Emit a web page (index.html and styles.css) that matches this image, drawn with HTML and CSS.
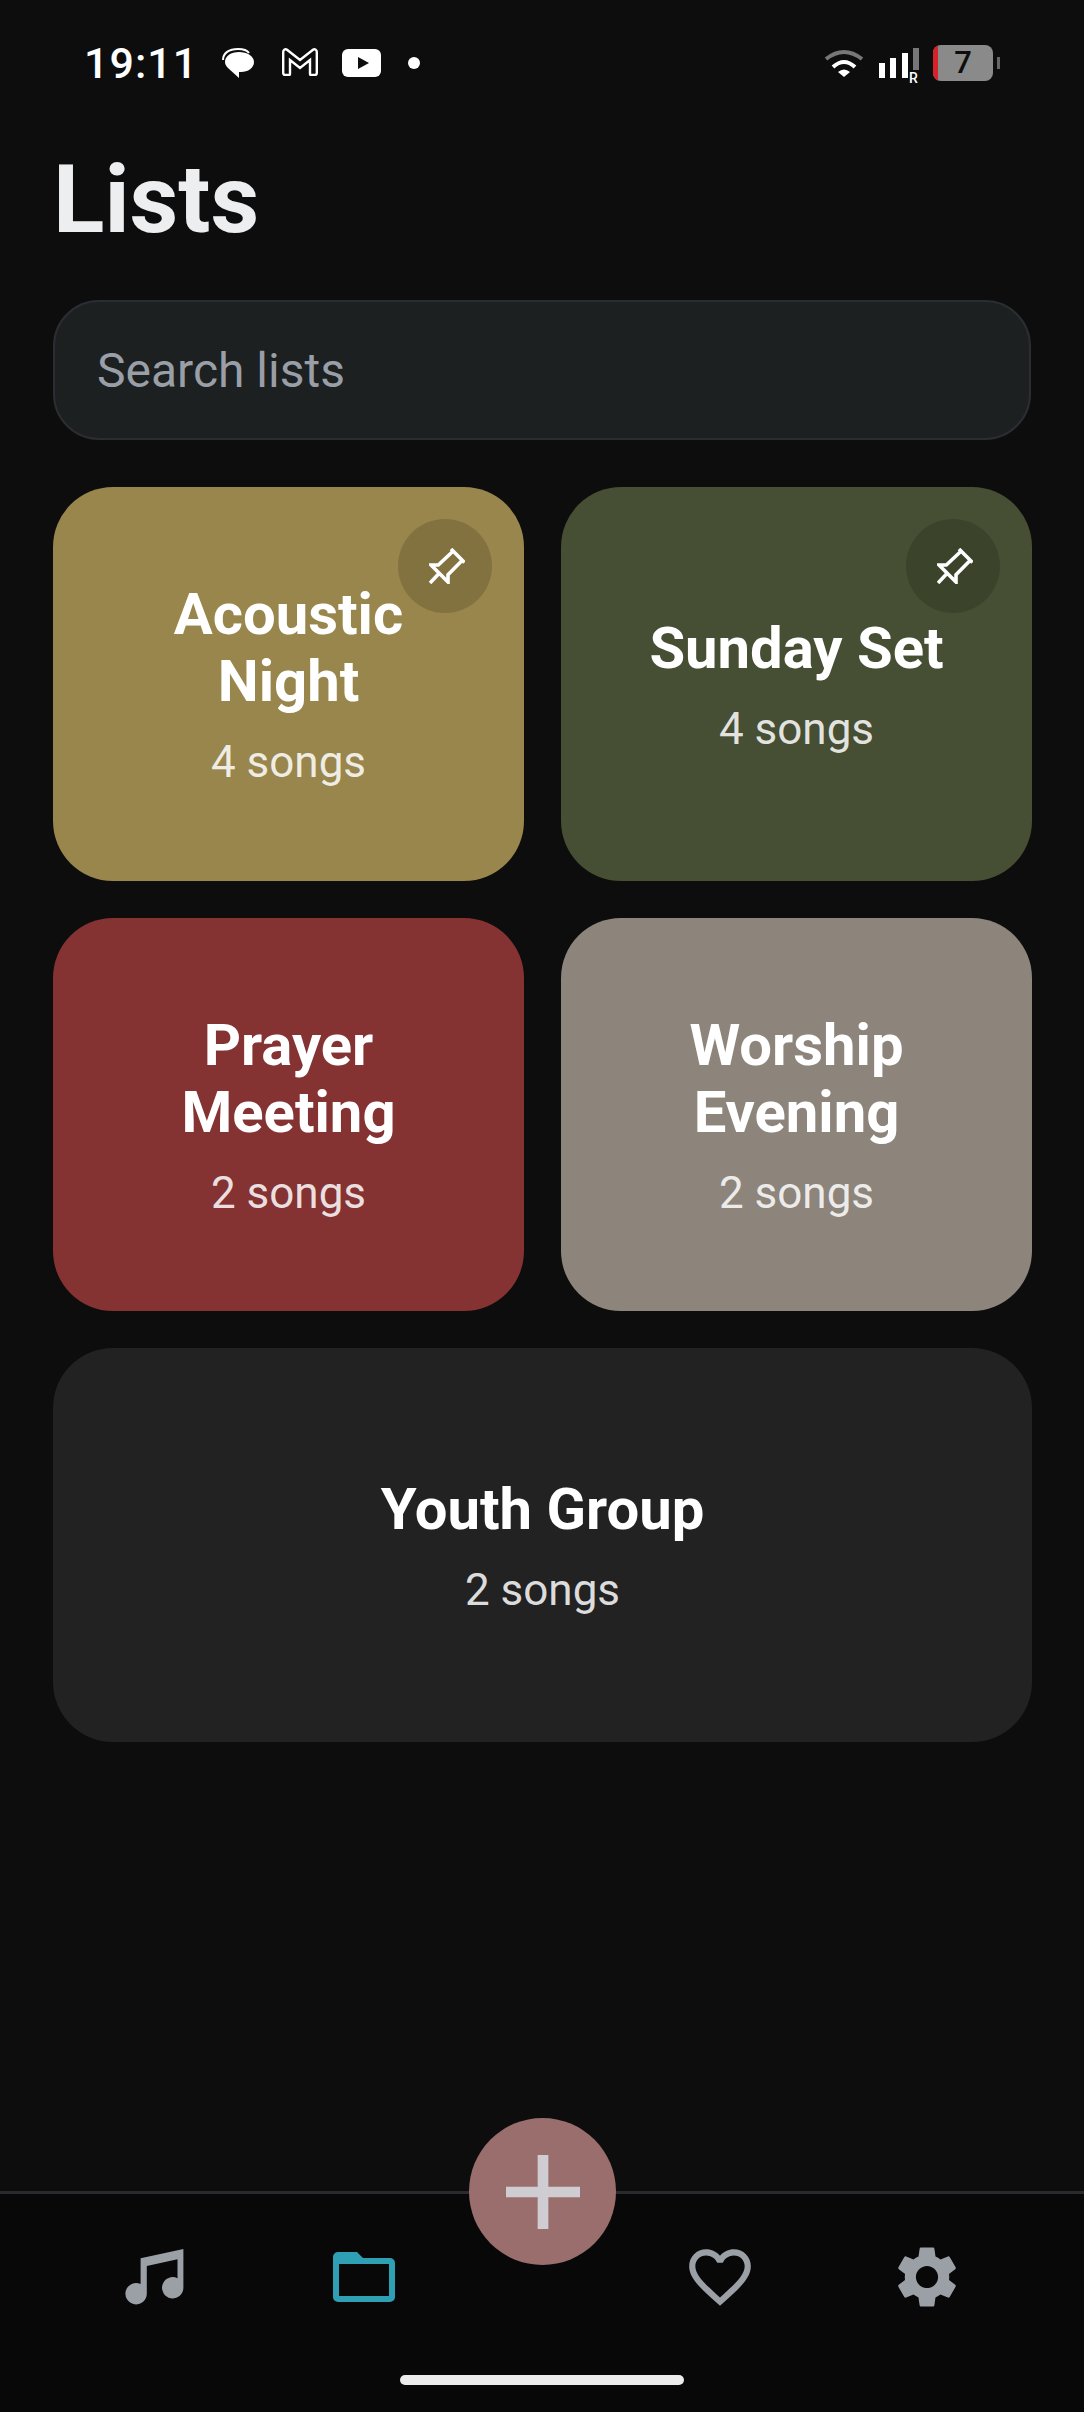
FILE: index.html
```html
<!DOCTYPE html>
<html lang="en">
<head>
  <meta charset="UTF-8">
  <title>Lists</title>
  <link rel="stylesheet" href="styles.css">
</head>
<body>
  <div class="screen">

    <div class="status-bar">
      <span class="time">19:11</span>
      <svg class="st-chat" width="32" height="30" viewBox="0 0 32 30">
        <path d="M1 12C1 5 7 1 16 1c5 0 9 1 11 4" fill="none" stroke="#fff" stroke-width="2"/>
        <path d="M3 14C3 8 9 4 17 4c8 0 15 4 15 10 0 6-6 10-13 10h-2v6L6 20c-2-2-3-4-3-6z" fill="#fff"/>
      </svg>
      <svg class="st-gmail" width="36" height="28" viewBox="0 0 36 28">
        <path d="M1.200 4C1.200 1.500 3.500.6 5 1.800L18 12 31 1.800C32.500.6 34.800 1.500 34.800 4V25c0 1.200-.8 2-2 2H29c-.6 0-1-.4-1-1V12l-10 8-10-8v14c0 .6-.4 1-1 1H3.200c-1.200 0-2-.8-2-2z" fill="none" stroke="#fff" stroke-width="2.400"/>
      </svg>
      <svg class="st-yt" width="39" height="28" viewBox="0 0 39 28">
        <rect width="39" height="28" rx="6" fill="#fff"/>
        <path d="M16 8l11 6-11 6z" fill="#0d0d0d"/>
      </svg>
      <span class="st-dot"></span>

      <div class="status-right">
        <svg width="40" height="28" viewBox="0 0 40 28">
          <path d="M2 10Q20-4 38 10" fill="none" stroke="#777" stroke-width="4"/>
          <path d="M9 18Q20 8 31 18" fill="none" stroke="#fff" stroke-width="4"/>
          <path d="M14 23Q20 18 26 23L20 28z" fill="#fff"/>
        </svg>
        <div class="signal">
          <span class="bar bar-1"></span>
          <span class="bar bar-2"></span>
          <span class="bar bar-3"></span>
          <span class="bar bar-4"></span>
          <span class="roaming">R</span>
        </div>
        <div class="battery">
          <div class="battery-body"><span class="battery-low"></span>7</div>
          <span class="battery-nib"></span>
        </div>
      </div>
    </div>

    <h1 class="page-title">Lists</h1>

    <div class="search">Search lists</div>

    <div class="grid">
      <div class="card gold">
        <span class="pin-btn">
          <svg width="36" height="36" viewBox="0 0 36 36"><path d="M1 35l8.500-9M22 1l13.500 13.500M24 3.300L9.300 17H2l17 17v-7.300L33.300 12.300" fill="none" stroke="#fff" stroke-width="3.600"/></svg>
        </span>
        <div class="card-title">Acoustic Night</div>
        <div class="card-count">4 songs</div>
      </div>
      <div class="card olive">
        <span class="pin-btn">
          <svg width="36" height="36" viewBox="0 0 36 36"><path d="M1 35l8.500-9M22 1l13.500 13.500M24 3.300L9.300 17H2l17 17v-7.300L33.300 12.300" fill="none" stroke="#fff" stroke-width="3.600"/></svg>
        </span>
        <div class="card-title">Sunday Set</div>
        <div class="card-count">4 songs</div>
      </div>
      <div class="card red">
        <div class="card-title">Prayer Meeting</div>
        <div class="card-count">2 songs</div>
      </div>
      <div class="card stone">
        <div class="card-title">Worship Evening</div>
        <div class="card-count">2 songs</div>
      </div>
      <div class="card dark wide">
        <div class="card-title">Youth Group</div>
        <div class="card-count">2 songs</div>
      </div>
    </div>

    <div class="nav">
      <div class="nav-item">
        <svg width="59" height="56" viewBox="0 0 59 56"><path class="nav-icon" d="M15.600 9.300L58.400 0v39a10.700 10.700 0 1 1-5.900-9.800V10.300L21.800 17v28a10.700 10.700 0 1 1-6.200-10z"/></svg>
      </div>
      <div class="nav-item">
        <svg width="62" height="50" viewBox="0 0 62 50"><path class="nav-icon active" fill-rule="evenodd" d="M5 0h19l6 6h27a5 5 0 0 1 5 5v34a5 5 0 0 1-5 5H5a5 5 0 0 1-5-5V5a5 5 0 0 1 5-5zM6 12v32h50V12z"/></svg>
      </div>
      <div class="nav-item"></div>
      <div class="nav-item">
        <svg width="74" height="74" viewBox="0 0 24 24"><path class="nav-icon" d="M16.500 3c-1.740 0-3.410.81-4.500 2.090C10.910 3.810 9.240 3 7.500 3 4.420 3 2 5.420 2 8.500c0 3.780 3.400 6.860 8.550 11.540L12 21.350l1.450-1.320C18.600 15.360 22 12.280 22 8.500 22 5.420 19.580 3 16.500 3zm-4.400 15.550l-.1.1-.1-.1C7.140 14.240 4 11.390 4 8.500 4 6.500 5.500 5 7.500 5c1.540 0 3.040.99 3.570 2.360h1.870C13.460 5.990 14.960 5 16.500 5c2 0 3.500 1.500 3.500 3.500 0 2.890-3.140 5.740-7.900 10.050z"/></svg>
      </div>
      <div class="nav-item">
        <svg width="74" height="74" viewBox="0 0 24 24"><path class="nav-icon" d="M19.140 12.940c.04-.3.06-.61.06-.94 0-.32-.02-.64-.07-.94l2.030-1.580c.18-.14.23-.41.12-.61l-1.920-3.320c-.12-.22-.37-.29-.59-.22l-2.390.96c-.5-.38-1.030-.7-1.620-.94l-.36-2.540c-.04-.24-.24-.41-.48-.41h-3.840c-.24 0-.43.17-.47.41l-.36 2.540c-.59.24-1.130.57-1.620.94l-2.390-.96c-.22-.08-.47 0-.59.22L2.740 8.870c-.12.21-.08.47.12.61l2.030 1.580c-.05.3-.09.63-.09.94s.02.64.07.94l-2.030 1.580c-.18.14-.23.41-.12.61l1.920 3.320c.12.22.37.29.59.22l2.390-.96c.5.38 1.030.7 1.620.94l.36 2.540c.05.24.24.41.48.41h3.840c.24 0 .44-.17.47-.41l.36-2.540c.59-.24 1.130-.56 1.620-.94l2.390.96c.22.08.47 0 .59-.22l1.920-3.320c.12-.22.07-.47-.12-.61l-2.010-1.580zM12 15.600c-1.980 0-3.600-1.620-3.600-3.600s1.620-3.600 3.600-3.600 3.600 1.620 3.600 3.600-1.620 3.600-3.600 3.600z"/></svg>
      </div>
      <div class="fab">
        <svg width="74" height="74" viewBox="0 0 76 76"><path d="M32.500 0h11v32.500H76v11H43.500V76h-11V43.500H0v-11h32.500z" fill="#cfcdd2"/></svg>
      </div>
      <span class="home-bar"></span>
    </div>

  </div>
</body>
</html>
```

FILE: styles.css
```css
body {
  margin: 0;
  font-family: Roboto, sans-serif;
  background-color: #0d0d0d;
}
.screen {
  height: 2412px;
  display: flex;
  flex-direction: column;
  overflow: hidden;
}

/* Status bar */
.status-bar {
  height: 126px;
  flex: none;
  display: flex;
  align-items: center;
  padding: 0 84px 0 84px;
  color: #fff;
}
.time {
  font-size: 43px;
  font-weight: 500;
  letter-spacing: 1px;
}
.st-chat { margin-left: 24px; }
.st-gmail { margin-left: 28px; margin-top: -2px; }
.st-yt { margin-left: 24px; }
.st-dot {
  width: 12px;
  height: 12px;
  margin-left: 27px;
  border-radius: 50%;
  background: #fff;
}
.status-right {
  margin-left: auto;
  display: flex;
  align-items: center;
}
.signal {
  position: relative;
  width: 40px;
  height: 30px;
  margin-left: 15px;
}
.bar {
  position: absolute;
  bottom: 0;
  width: 6px;
  background: #fff;
}
.bar-1 { left: 0; height: 15px; }
.bar-2 { left: 11px; height: 20px; }
.bar-3 { left: 23px; height: 25px; }
.bar-4 { left: 34px; height: 22px; bottom: 8px; background: #777; }
.roaming {
  position: absolute;
  left: 30px;
  top: 23px;
  font-size: 14px;
  line-height: 14px;
  font-weight: 500;
}
.battery {
  display: flex;
  align-items: center;
  margin-left: 14px;
}
.battery-body {
  position: relative;
  width: 60px;
  height: 36px;
  border-radius: 8px;
  overflow: hidden;
  background: #8a8a8a;
  color: #0d0d0d;
  font-size: 31px;
  font-weight: 500;
  line-height: 36px;
  text-align: center;
}
.battery-low {
  position: absolute;
  left: 0;
  top: 0;
  bottom: 0;
  width: 5px;
  background: #d8222a;
}
.battery-nib {
  width: 3px;
  height: 12px;
  margin-left: 4px;
  background: #666;
}

/* Title + search */
.page-title {
  margin: 18px 0 0 53px;
  font-size: 95px;
  line-height: 112px;
  font-weight: 700;
  color: #eceef0;
}
.search {
  box-sizing: border-box;
  height: 140px;
  margin: 44px 53px 0 53px;
  padding-left: 42px;
  display: flex;
  align-items: center;
  background: #1c2021;
  border: 2px solid #2a2e33;
  border-radius: 46px;
  font-size: 48px;
  color: #9a9ea6;
}

/* Cards */
.grid {
  display: grid;
  grid-template-columns: 1fr 1fr;
  grid-auto-rows: 393.5px;
  gap: 37px;
  margin: 47px 52px 0 53px;
}
.card {
  position: relative;
  display: flex;
  flex-direction: column;
  align-items: center;
  justify-content: center;
  padding: 6px 60px 0;
  border-radius: 60px;
  text-align: center;
}
.wide { grid-column: 1 / 3; }
.gold { background: #99864c; }
.olive { background: #464f33; }
.red { background: #853232; }
.stone { background: #8d857c; }
.dark { background: #222222; }
.card-title {
  font-size: 58px;
  line-height: 67px;
  font-weight: 700;
  color: #fff;
}
.card-count {
  margin-top: 17px;
  font-size: 44px;
  line-height: 60px;
  color: rgba(255,255,255,0.85);
}
.pin-btn {
  position: absolute;
  top: 32px;
  right: 32px;
  width: 94px;
  height: 94px;
  display: flex;
  align-items: center;
  justify-content: center;
  border-radius: 50%;
  background: rgba(0,0,0,0.15);
}
.pin-btn svg { margin-left: 3px; }

/* Bottom nav */
.nav {
  position: relative;
  margin-top: auto;
  box-sizing: border-box;
  height: 221px;
  padding: 0 0 48px 49px;
  display: grid;
  grid-template-columns: 210px 210px 146px 210px 204px;
  align-items: center;
  justify-items: center;
  background: #080808;
  border-top: 3px solid #2a2b2e;
}
.nav-icon { fill: #9aa0a6; }
.nav-icon.active { fill: #2f9fb3; }
.fab {
  position: absolute;
  left: 469px;
  top: -76px;
  width: 147px;
  height: 147px;
  display: flex;
  align-items: center;
  justify-content: center;
  border-radius: 50%;
  background: #996e6c;
}
.home-bar {
  position: absolute;
  left: 400px;
  bottom: 27px;
  width: 284px;
  height: 10px;
  border-radius: 5px;
  background: #ececec;
}
```
